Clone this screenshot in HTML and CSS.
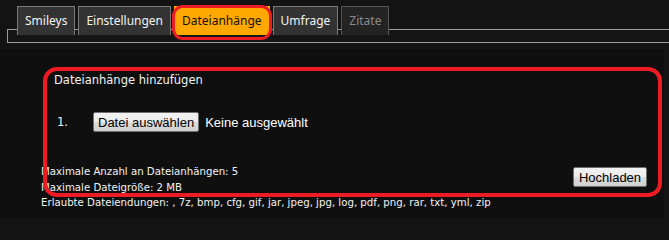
FILE: index.html
```html
<!DOCTYPE html>
<html lang="de">
<head>
<meta charset="utf-8">
<title>Dateianhänge</title>
<link rel="stylesheet" href="styles.css">
</head>
<body>
<div class="top">
  <ul class="tabs">
    <li class="tab">Smileys</li>
    <li class="tab">Einstellungen</li>
    <li class="tab tab-active">Dateianhänge</li>
    <li class="tab">Umfrage</li>
    <li class="tab tab-disabled">Zitate</li>
  </ul>
  <div class="bar"></div>
</div>
<div class="panel">
  <div class="highlight-box"></div>
  <div class="upload">
    <h3 class="upload-title">Dateianhänge hinzufügen</h3>
    <ol class="file-list">
      <li class="file-row"><span class="num">1.</span><button class="btn">Datei auswählen</button><span class="none">Keine ausgewählt</span></li>
    </ol>
  </div>
  <div class="footer">
    <div class="info">
      <div>Maximale Anzahl an Dateianhängen: 5</div>
      <div>Maximale Dateigröße: 2 MB</div>
      <div>Erlaubte Dateiendungen: , 7z, bmp, cfg, gif, jar, jpeg, jpg, log, pdf, png, rar, txt, yml, zip</div>
    </div>
    <button class="btn btn-upload">Hochladen</button>
  </div>
</div>
</body>
</html>
```

FILE: styles.css
```css
html, body {
  margin: 0;
  padding: 0;
  background: #131313;
  overflow: hidden;
}
body {
  width: 669px;
  height: 218px;
  color: #f2f2f2;
  font-family: "DejaVu Sans", Verdana, sans-serif;
}
.top {
  height: 49px;
}
.tabs {
  list-style: none;
  margin: 0;
  padding: 6px 0 0 17px;
  display: flex;
  gap: 3px;
  height: 29px;
  box-sizing: border-box;
}
.tab {
  position: relative;
  height: 29px;
  box-sizing: border-box;
  padding: 0 7px;
  background: #333333;
  border: 1px solid #7a7a7a;
  border-bottom: none;
  color: #f4f4f4;
  font-family: "Noto Sans", "Open Sans", sans-serif;
  font-size: 12px;
  line-height: 27px;
}
.tab-active {
  background: #ffa800;
  color: #111;
  border-color: #ffa800;
}
.tab-active::after {
  content: "";
  position: absolute;
  left: -3px;
  right: -3px;
  top: -2px;
  bottom: -5px;
  border: 3px solid #ed1c24;
  border-radius: 11px;
}
.tab-disabled {
  background: #232323;
  border-color: #555;
  color: #8a8a8a;
}
.bar {
  margin-left: 7px;
  height: 14px;
  box-sizing: border-box;
  border: 1px solid #9a9a9a;
  border-right: none;
  background: #151515;
}
.panel {
  position: relative;
  width: 664px;
  height: 169px;
  background: #0f0f0f;
  padding-top: 23px;
  box-sizing: border-box;
}
.highlight-box {
  position: absolute;
  left: 43px;
  top: 18px;
  width: 619px;
  height: 130px;
  box-sizing: border-box;
  border: 4px solid #ed1c24;
  border-radius: 14px;
  pointer-events: none;
}
.upload {
  padding-left: 54px;
}
.upload-title {
  margin: 0;
  font-weight: normal;
  font-size: 11.5px;
  line-height: 16px;
}
.file-list {
  list-style: none;
  margin: 24px 0 0 0;
  padding: 0 0 0 3px;
}
.file-row {
  display: flex;
  align-items: center;
  height: 20px;
  font-size: 11.5px;
}
.num {
  width: 36px;
}
.btn {
  font-family: "Liberation Sans", Arial, sans-serif;
  font-size: 13px;
  color: #000;
  height: 20px;
  padding: 0 4px;
  margin: 0;
  border: 1px solid #707070;
  border-radius: 2px;
  background: linear-gradient(#f2f2f2, #ebebeb 50%, #dddddd 50%, #cfcfcf);
}
.none {
  margin-left: 6px;
  font-family: "Liberation Sans", Arial, sans-serif;
  font-size: 13px;
  color: #fff;
}
.footer {
  display: flex;
  justify-content: space-between;
  align-items: flex-start;
  margin-top: 32px;
  padding-left: 41px;
  padding-right: 17px;
}
.info {
  font-size: 10.2px;
  line-height: 15.5px;
  white-space: nowrap;
}
.btn-upload {
  margin-top: 3px;
  width: 74px;
  padding: 0;
}
```
